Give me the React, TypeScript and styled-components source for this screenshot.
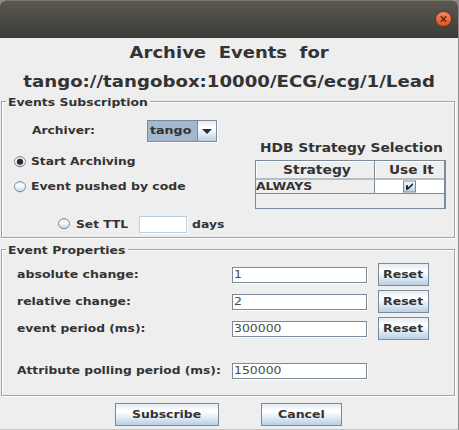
import React from 'react';
import styled, { createGlobalStyle, css } from 'styled-components';

const Global = createGlobalStyle`
  * { box-sizing: border-box; }
  body { margin: 0; overflow: hidden; background: #eee; }
`;

const Window = styled.main`
  width: 459px;
  height: 430px;
  background: #eeeeee;
  border-right: 1px solid #8d8d8d;
  border-bottom: 1px solid #c4c4c4;
  font-family: 'DejaVu Sans', sans-serif;
  color: #333;
  overflow: hidden;
`;

const TitleBar = styled.header`
  height: 38px;
  display: flex;
  justify-content: flex-end;
  padding: 10px 6px 0 0;
  border-top: 1px solid #77756c;
  border-radius: 6px 6px 0 0;
  background: linear-gradient(#5a584f, #3c3b37);
  box-shadow: 0 -6px 0 6px #8b8a82;
  clip-path: inset(0);
`;

const CloseButton = styled.button`
  width: 17px;
  height: 16px;
  padding: 0;
  border: 0;
  background: none;
  svg { display: block; }
`;

/* Java's wide bold face: DejaVu stretched along x. */
const Text = styled.span<{ $size?: number; $stretch?: number; $regular?: boolean }>`
  display: block;
  flex: none;
  width: max-content;
  height: 14px;
  line-height: 14px;
  white-space: pre;
  font-size: ${(p) => p.$size ?? 11}px;
  font-weight: ${(p) => (p.$regular ? 400 : 700)};
  transform: scaleX(${(p) => p.$stretch ?? 1.114});
  transform-origin: 0 50%;
`;

const Heading = styled.h1`
  margin: 0;
  height: 60px;
  padding-top: 8px;
  display: flex;
  flex-direction: column;
  align-items: center;
  gap: 15px;
  ${Text} { transform-origin: 50% 50%; }
`;

const Group = styled.fieldset<{ $height: number }>`
  margin: 0 3px 0 1px;
  padding: 0;
  min-width: 0;
  width: 454px;
  height: ${(p) => p.$height}px;
  border: 1px solid #a2a2a2;
  box-shadow: 1px 1px 0 #fff, inset 1px 1px 0 #fff;
`;

const GroupTitle = styled.div<{ $width: number }>`
  width: ${(p) => p.$width}px;
  height: 14px;
  margin: -6px 0 0 4px;
  padding-left: 2px;
  background: #eee;
`;

const Row = styled.div<{ $top?: number; $left?: number; $height?: number }>`
  display: flex;
  align-items: center;
  height: ${(p) => p.$height ?? 14}px;
  margin-top: ${(p) => p.$top ?? 0}px;
  padding-left: ${(p) => p.$left ?? 0}px;
`;

const Columns = styled.div`
  display: grid;
  grid-template-columns: 253px 192px;
`;

const LabelCell = styled.div<{ $width: number }>`
  flex: none;
  width: ${(p) => p.$width}px;
`;

const metal = css`
  background: linear-gradient(#e2ebf4 0, #ffffff 32%, #fafcfe 42%, #b8cfe5 100%);
`;

const Combo = styled.div`
  display: flex;
  width: 70px;
  height: 22px;
  border: 1px solid #7a8a99;
  box-shadow: 1px 1px 0 #fff;
`;

const ComboValue = styled.div`
  width: 50px;
  padding: 3px 0 0 2px;
  background: #a3b8cc;
  border-right: 1px solid #7a8a99;
`;

const ComboArrow = styled.div`
  ${metal}
  flex: 1;
  display: grid;
  place-items: center;
`;

const Field = styled.div<{ $width: number; $height?: number; $soft?: boolean }>`
  width: ${(p) => p.$width}px;
  height: ${(p) => p.$height ?? 16}px;
  padding: ${(p) => (p.$soft ? 0 : '0 0 0 1px')};
  background: #fff;
  border: 1px solid ${(p) => (p.$soft ? '#b8cfe5' : '#7a8a99')};
  box-shadow: 1px 1px 0 #fff;
  color: #484848;
`;

const Button = styled.button<{ $width: number; $pad: number; $height?: number }>`
  ${metal}
  display: flex;
  align-items: center;
  width: ${(p) => p.$width}px;
  height: ${(p) => p.$height ?? 23}px;
  padding: 0 0 0 ${(p) => p.$pad}px;
  border: 1px solid #7a8a99;
  border-radius: 0;
  font-family: inherit;
  color: #333;
`;

const Strategy = styled.section`
  padding-top: 31px;
`;

const Table = styled.div`
  display: grid;
  grid-template-columns: 119px 1fr;
  grid-template-rows: 19px 14px 1fr;
  width: 191px;
  height: 49px;
  margin: 5px 0 0 0;
  border: 1px solid #7a8a99;
  border-right-width: 2px;
`;

const HeadCell = styled.div<{ $pad: number }>`
  padding: 2px 0 0 ${(p) => p.$pad}px;
  border-right: 1px solid #7a8a99;
  border-bottom: 2px solid #b4bcc5;
  box-shadow: inset 1px 1px 0 #fff;
  &:nth-child(2) { border-right: 0; }
`;

const Cell = styled.div<{ $white?: boolean }>`
  border-right: ${(p) => (p.$white ? 0 : 1)}px solid #7a8a99;
  border-bottom: 1px solid #7a8a99;
  background: ${(p) => (p.$white ? '#fff' : '#eee')};
  padding-left: ${(p) => (p.$white ? 28 : 0)}px;
  svg { display: block; }
`;

const Footer = styled.footer`
  display: flex;
  gap: 42px;
  padding: 7px 0 0 115px;
`;

function Radio({ checked = false, id }: { checked?: boolean; id: string }) {
  return (
    <svg width="12" height="12" viewBox="0 0 12 12">
      <defs>
        <linearGradient id={id} x1="0" y1="0" x2="0" y2="1">
          <stop offset="0" stopColor="#dce7f1" />
          <stop offset=".4" stopColor="#fff" />
          <stop offset="1" stopColor="#b8cfe5" />
        </linearGradient>
      </defs>
      <ellipse cx="6" cy="5.7" rx="5.5" ry="5.1" fill={`url(#${id})`} stroke="#7a8a99" />
      {checked && <ellipse cx="6" cy="5.7" rx="3.2" ry="3" fill="#2b2b2f" />}
    </svg>
  );
}

const RadioSlot = styled.div<{ $gap: number }>`
  flex: none;
  width: 12px;
  height: 12px;
  margin: -1px ${(p) => p.$gap}px 0 0;
  svg { display: block; }
`;

interface Property { label: string; value: string; top: number; reset: boolean; stretch: number }

const properties: Property[] = [
  { label: 'absolute change:', value: '1', top: 5, reset: true, stretch: 1.14 },
  { label: 'relative change:', value: '2', top: 4, reset: true, stretch: 1.13 },
  { label: 'event period (ms):', value: '300000', top: 4, reset: true, stretch: 1.114 },
  { label: 'Attribute polling period (ms):', value: '150000', top: 19, reset: false, stretch: 1.114 },
];

export default function App() {
  return (
    <>
      <Global />
      <Window>
        <TitleBar>
          <CloseButton aria-label="Close">
            <svg width="17" height="16" viewBox="0 0 17 16">
              <defs>
                <linearGradient id="close" x1="0" y1="0" x2="0" y2="1">
                  <stop offset="0" stopColor="#f58660" />
                  <stop offset="1" stopColor="#e2501f" />
                </linearGradient>
              </defs>
              <ellipse cx="8.5" cy="8" rx="8" ry="7.5" fill="url(#close)" stroke="#4a2d22" strokeWidth=".8" />
              <path d="M5.8 5.3 L11.2 10.7 M11.2 5.3 L5.8 10.7" stroke="#572411" strokeWidth="1.3" />
            </svg>
          </CloseButton>
        </TitleBar>

        <Heading>
          <Text $size={16.5} $stretch={1.092}>Archive  Events  for</Text>
          <Text $size={16.5} $stretch={1.1}>tango://tangobox:10000/ECG/ecg/1/Lead</Text>
        </Heading>

        <Row $height={3} />
        <Group $height={137}>
          <GroupTitle $width={144}><Text $stretch={1.13}>Events Subscription</Text></GroupTitle>
          <Columns>
            <div>
              <Row $top={10} $left={30} $height={22}>
                <LabelCell $width={115}><Text>Archiver:</Text></LabelCell>
                <Combo>
                  <ComboValue><Text $stretch={1.15}>tango</Text></ComboValue>
                  <ComboArrow>
                    <svg width="10" height="5" viewBox="0 0 10 5"><path d="M0 0H10L5 5Z" fill="#2d2d30" /></svg>
                  </ComboArrow>
                </Combo>
              </Row>
              <Row $top={13} $left={12}>
                <RadioSlot $gap={5}><Radio id="r1" checked /></RadioSlot>
                <Text>Start Archiving</Text>
              </Row>
              <Row $top={11} $left={12}>
                <RadioSlot $gap={5}><Radio id="r2" /></RadioSlot>
                <Text $stretch={1.132}>Event pushed by code</Text>
              </Row>
              <Row $top={22} $left={56} $height={17}>
                <RadioSlot $gap={6}><Radio id="r3" /></RadioSlot>
                <LabelCell $width={63}><Text>Set TTL</Text></LabelCell>
                <LabelCell $width={53}><Field $width={48} $height={17} $soft /></LabelCell>
                <Text $stretch={1.13}>days</Text>
              </Row>
            </div>
            <Strategy>
              <Row $left={5}><Text $size={12.4} $stretch={1.113}>HDB Strategy Selection</Text></Row>
              <Table>
                <HeadCell $pad={27}><Text $size={12.4} $stretch={1.12}>Strategy</Text></HeadCell>
                <HeadCell $pad={14}><Text $size={12.4} $stretch={1.1}>Use It</Text></HeadCell>
                <Cell><Text $stretch={1.13}>ALWAYS</Text></Cell>
                <Cell $white>
                  <svg width="13" height="13" viewBox="0 0 13 13">
                    <defs>
                      <linearGradient id="check" x1="0" y1="0" x2="0" y2="1">
                        <stop offset="0" stopColor="#f6f9fc" />
                        <stop offset="1" stopColor="#b8cfe5" />
                      </linearGradient>
                    </defs>
                    <rect x=".5" y="1" width="12" height="11" fill="url(#check)" stroke="#7a8a99" />
                    <path d="M3 5.3H5V7.4L10 3V5L5 9.8H3Z" fill="#222" />
                  </svg>
                </Cell>
              </Table>
            </Strategy>
          </Columns>
        </Group>

        <Row $height={11} />
        <Group $height={147}>
          <GroupTitle $width={122}><Text $stretch={1.13}>Event Properties</Text></GroupTitle>
          {properties.map((p) => (
            <Row key={p.label} $top={p.top} $left={15} $height={23}>
              <LabelCell $width={215}><Text $stretch={p.stretch}>{p.label}</Text></LabelCell>
              <LabelCell $width={146}>
                <Field $width={135}><Text $regular $stretch={1.13}>{p.value}</Text></Field>
              </LabelCell>
              {p.reset && <Button $width={51} $pad={4}><Text $stretch={1.14}>Reset</Text></Button>}
            </Row>
          ))}
        </Group>

        <Footer>
          <Button $width={104} $pad={16}><Text $stretch={1.13}>Subscribe</Text></Button>
          <Button $width={81} $pad={16}><Text $stretch={1.14}>Cancel</Text></Button>
        </Footer>
      </Window>
    </>
  );
}
